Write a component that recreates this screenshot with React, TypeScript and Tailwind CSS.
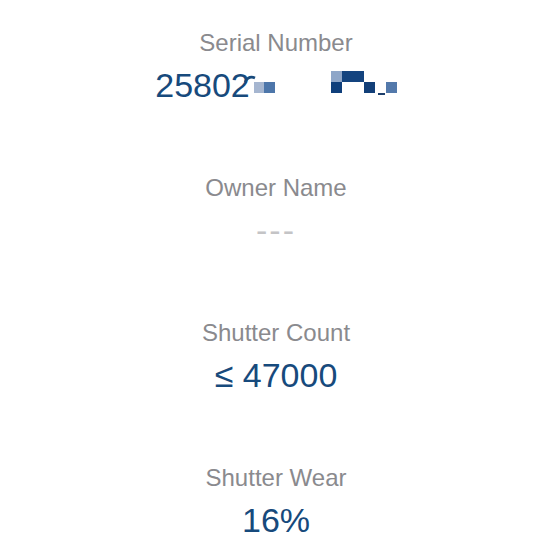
import React from "react";

const font = { fontFamily: '"Liberation Sans", Arial, sans-serif' };

// redacted part of the serial number, drawn as mosaic cells
function Mosaic() {
	return (
		<span className="relative inline-block w-[147px] h-[36px] align-top">
			<svg
				className="absolute left-[-6px] top-0"
				width="14"
				height="36"
				viewBox="0 0 14 36"
			>
				<path
					d="M1 15 Q5 8 11 11"
					stroke="#174a7c"
					strokeWidth="2.6"
					fill="none"
				/>
			</svg>
			<span className="absolute left-[4px] top-[15px] w-[10px] h-[11px] bg-[#a6b6d0]" />
			<span className="absolute left-[14px] top-[15px] w-[11px] h-[11px] bg-[#4d76aa]" />
			<span className="absolute left-[81px] top-[4px] w-[11px] h-[11px] bg-[#8ea6c8]" />
			<span className="absolute left-[92px] top-[4px] w-[22px] h-[11px] bg-[#14447f]" />
			<span className="absolute left-[81px] top-[15px] w-[11px] h-[11px] bg-[#0f3f7b]" />
			<span className="absolute left-[114px] top-[15px] w-[11px] h-[11px] bg-[#123f78]" />
			<span className="absolute left-[128px] top-[26px] w-[7px] h-[2px] bg-[#1d3f6b]" />
			<span className="absolute left-[136px] top-[15px] w-[11px] h-[11px] bg-[#5379ab]" />
		</span>
	);
}

function Field({ label, children }: { label: string; children: React.ReactNode }) {
	return (
		<div className="flex flex-col items-center gap-[12px]">
			<p className="text-[24px] leading-[24px] text-[#8a8a8e]">{label}</p>
			<div className="text-[34px] leading-[36px] text-[#174a7c] whitespace-nowrap">
				{children}
			</div>
		</div>
	);
}

export default function App() {
	return (
		<div className="w-[552px] h-[552px] bg-white overflow-hidden" style={font}>
			<div className="flex flex-col gap-[73px] pt-[31px]">
				<Field label="Serial Number">
					<span>25802</span>
					<Mosaic />
				</Field>
				<Field label="Owner Name">
					<span className="text-[#c4c4c6] tracking-[2px]">---</span>
				</Field>
				<Field label="Shutter Count">≤ 47000</Field>
				<Field label="Shutter Wear">16%</Field>
			</div>
		</div>
	);
}
